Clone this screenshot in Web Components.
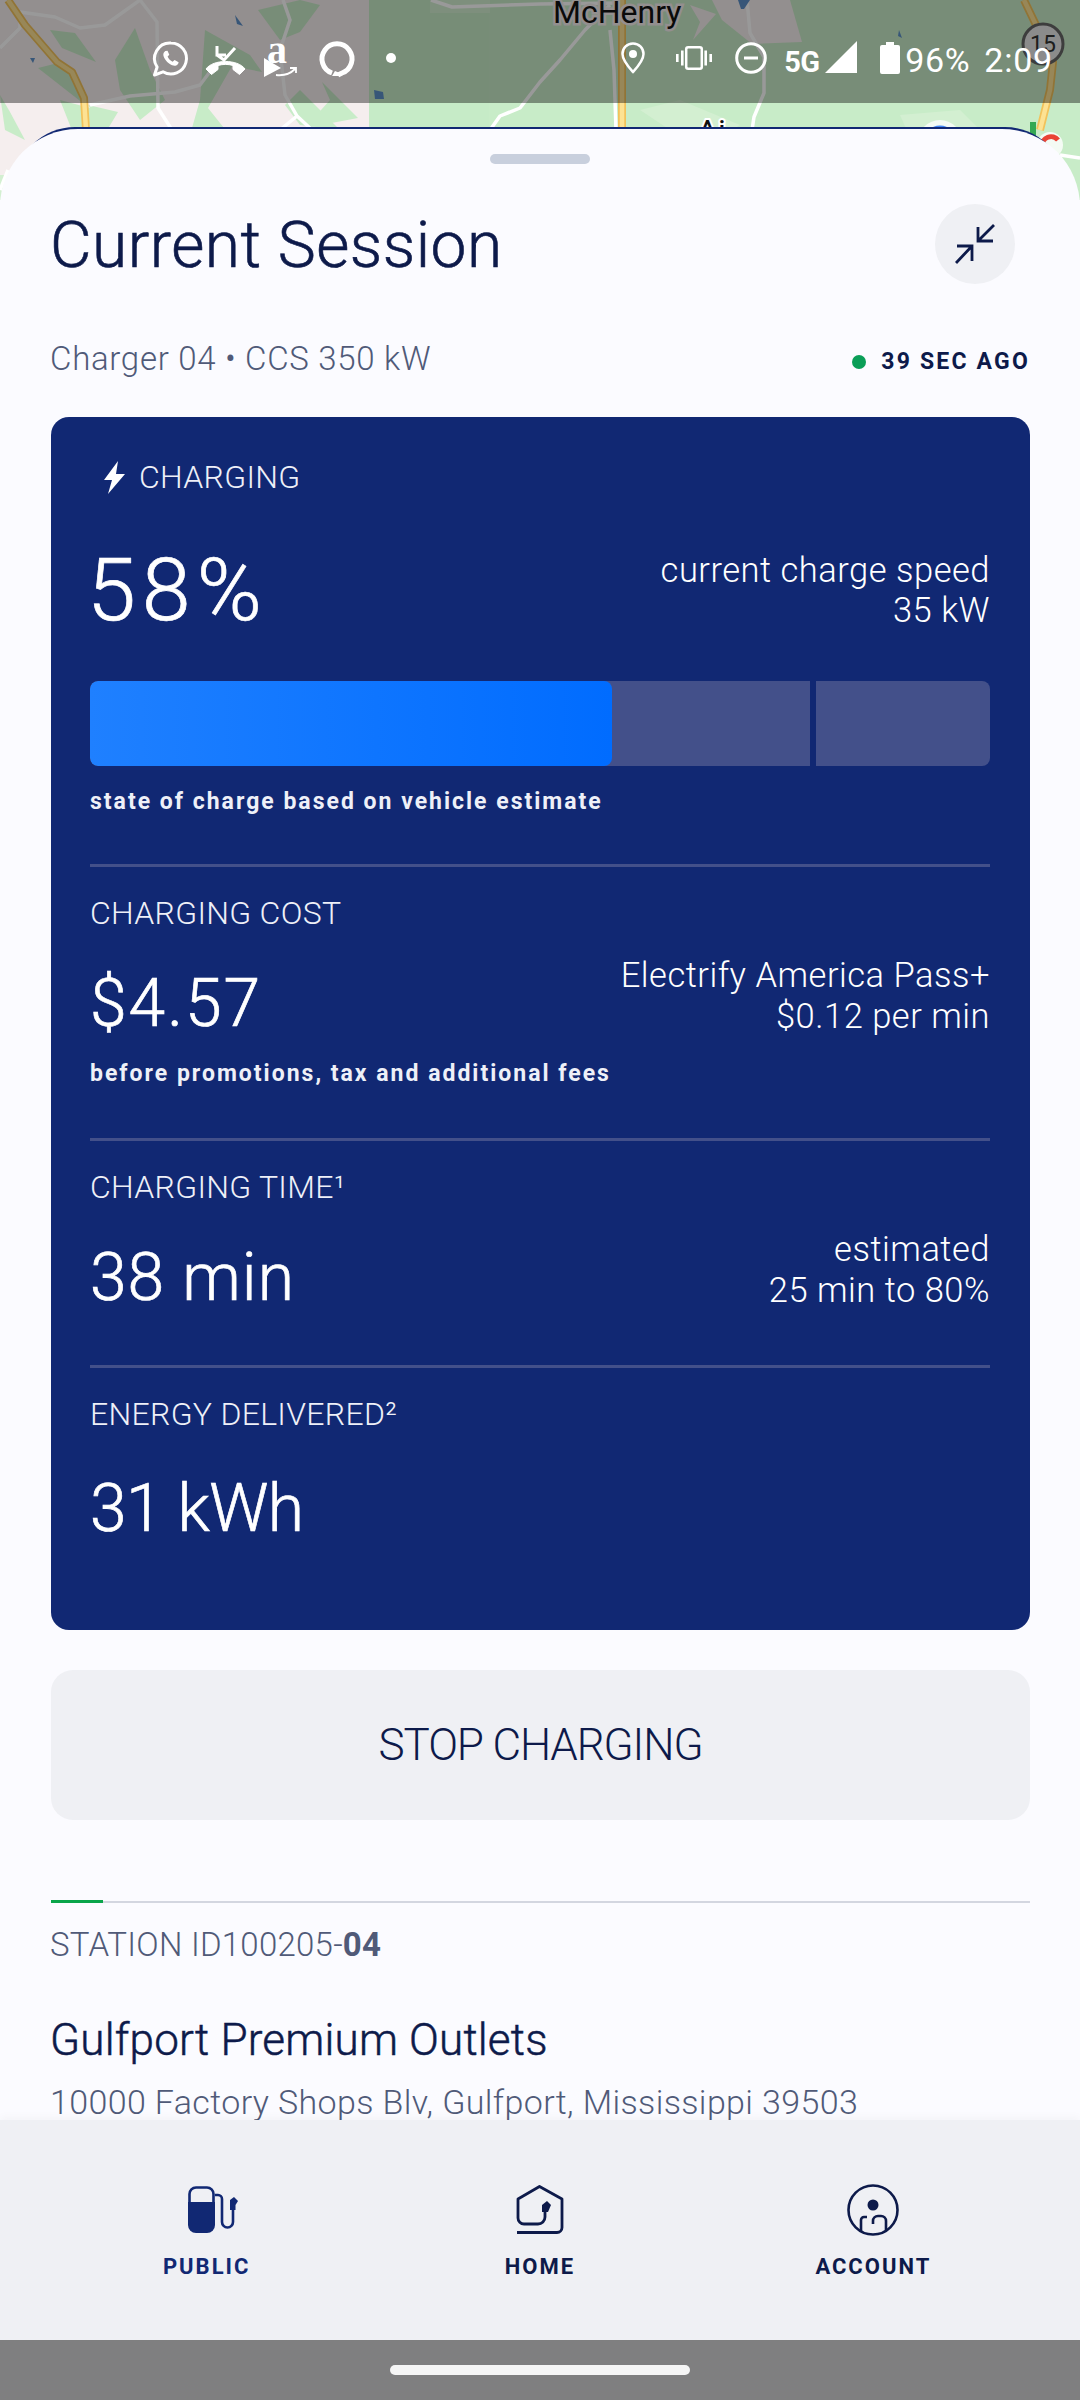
<!DOCTYPE html>
<html lang="en">
<head>
<meta charset="utf-8">
<title>Current Session</title>
<style>
  html, body { margin: 0; padding: 0; background: #fbfbff; }
  body { font-family: Roboto, "Liberation Sans", sans-serif; }
</style>
</head>
<body>
<app-screen>
  <map-header>
    <status-bar></status-bar>
  </map-header>
  <session-sheet>
    <metric-block slot="metrics" kind="hero">
      <span slot="label">CHARGING</span>
      <span slot="value">58%</span>
      <span slot="aside">current charge speed<br>35 kW</span>
      <charge-bar slot="extra"></charge-bar>
      <span slot="note">state of charge based on vehicle estimate</span>
    </metric-block>
    <metric-block slot="metrics" kind="cost">
      <span slot="label">CHARGING COST</span>
      <span slot="value">$4.57</span>
      <span slot="aside">Electrify America Pass+<br>$0.12 per min</span>
      <span slot="note">before promotions, tax and additional fees</span>
    </metric-block>
    <metric-block slot="metrics" kind="time">
      <span slot="label">CHARGING TIME¹</span>
      <span slot="value">38 min</span>
      <span slot="aside">estimated<br>25 min to 80%</span>
    </metric-block>
    <metric-block slot="metrics" kind="last">
      <span slot="label">ENERGY DELIVERED²</span>
      <span slot="value">31 kWh</span>
    </metric-block>
  </session-sheet>
  <tab-bar>
    <tab-item icon="public" active>PUBLIC</tab-item>
    <tab-item icon="home">HOME</tab-item>
    <tab-item icon="account">ACCOUNT</tab-item>
  </tab-bar>
  <gesture-bar></gesture-bar>
</app-screen>

<script>
class AppScreen extends HTMLElement {
  constructor() {
    super();
    this.attachShadow({ mode: 'open' });
    this.shadowRoot.innerHTML = `
      <style>
        :host { display: flex; flex-direction: column; width: 1080px; height: 2400px; overflow: hidden; position: relative; }
      </style>
      <slot></slot>`;
  }
}

class MapHeader extends HTMLElement {
  constructor() {
    super();
    this.attachShadow({ mode: 'open' });
    this.shadowRoot.innerHTML = `
      <style>
        :host { display: block; height: 129px; flex: none; position: relative; }
        svg { position: absolute; left: 0; top: 0; }
        .top { position: relative; }
      </style>
      <svg width="1080" height="200" viewBox="0 0 1080 200">
        <rect width="1080" height="200" fill="#c8ecc8"/>
        <rect width="369" height="200" fill="#f5eeee"/>
        <g fill="#c8ecc8">
          <polygon points="50,30 75,33 96,62 62,48"/>
          <polygon points="0,95 10,112 25,140 5,130"/>
          <polygon points="38,68 62,62 90,108 60,100 75,138 100,142 118,112 84,104"/>
          <polygon points="115,60 135,28 150,70 165,100 140,120 120,90"/>
          <polygon points="205,30 250,55 262,72 232,66 208,108 240,148 205,132 190,135 200,100"/>
          <polygon points="258,10 300,0 320,5 300,32 280,40"/>
          <polygon points="322,82 358,118 305,128 330,100"/>
          <polygon points="285,105 300,90 340,130 300,125"/>
        </g>
        <rect x="369" width="120" height="200" fill="#c6ebc7"/>
        <g fill="#d3efd1">
          <rect x="430" width="60" height="13"/>
          <polygon points="640,110 680,100 740,125 700,150"/>
          <polygon points="900,115 960,110 1000,150 920,160"/>
          <polygon points="0,175 22,175 8,200 0,200"/>
        </g>
        <g fill="#f5eeee">
          <polygon points="712,0 790,0 802,42 752,44 722,20"/>
          <polygon points="690,5 716,14 693,40 700,22"/>
        </g>
        <g fill="none" stroke="#fff" stroke-width="3.5" stroke-linejoin="round">
          <path d="M20 12 L55 17 L80 28 L105 25 L140 0"/>
          <path d="M0 48 L20 28 L20 12"/>
          <path d="M140 0 L157 22 L158 108 L172 130 L176 140"/>
          <path d="M283 0 L290 20 L280 50 L285 95 L297 116 L312 130"/>
          <path d="M297 116 L280 130"/>
          <path d="M90 105 L130 96 L175 92 L200 85 L215 65"/>
          <path d="M431 0 L452 7 L540 4 L620 3"/>
          <path d="M490 130 L500 116 L520 108 L540 82 L560 60 L585 30 L610 5"/>
          <path d="M610 30 L614 70 L616 130"/>
          <path d="M747 0 L750 33 L764 57 L764 93 L754 117 L752 130"/>
          <path d="M1060 155 L1080 158"/>
          <path d="M0 190 L8 170"/>
        </g>
        <g fill="none" stroke-linejoin="round">
          <path d="M8 0 L25 25 L57 62 L72 72 L84 98 L86 130 L88 160" stroke="#f2c25b" stroke-width="8"/>
          <path d="M8 0 L25 25 L57 62 L72 72 L84 98 L86 130 L88 160" stroke="#fde293" stroke-width="4.5"/>
          <path d="M622 0 V130" stroke="#f2c25b" stroke-width="8"/>
          <path d="M622 0 V130" stroke="#fde293" stroke-width="4.5"/>
          <path d="M1024 0 L1036 25 L1041 42 L1053 62 L1050 90 L1040 130" stroke="#f2c25b" stroke-width="8"/>
          <path d="M1024 0 L1036 25 L1041 42 L1053 62 L1050 90 L1040 130" stroke="#fde293" stroke-width="4.5"/>
        </g>
        <g fill="#5d90c8">
          <polygon points="738,0 750,0 744,9 741,9"/>
          <polygon points="235,15 243,26 237,24"/>
          <polygon points="30,58 35,58 33,63"/>
          <polygon points="374,90 383,92 384,99 375,99"/>
          <polygon points="899,30 902,38 898,36"/>
        </g>
        <circle cx="940" cy="142" r="22" fill="#fff" opacity=".75"/>
        <circle cx="940" cy="142" r="14" fill="none" stroke="#4285f4" stroke-width="5"/>
        <rect x="1030" y="122" width="6" height="18" fill="#34a853"/>
        <circle cx="1050" cy="145" r="13" fill="#fff" opacity=".8"/>
        <path d="M1042 146 a9 9 0 0 1 16 -6" fill="none" stroke="#ea4335" stroke-width="5"/>
        <circle cx="1043" cy="44" r="20" fill="#e8e8e8" stroke="#666" stroke-width="3"/>
        <text x="1043" y="52" text-anchor="middle" font-family="Roboto" font-size="23" fill="#333">15</text>
        <text x="553" y="23" font-family="Roboto" font-size="32" fill="#111" stroke="#f5eeee" stroke-width="5" paint-order="stroke">McHenry</text>
        <text x="697" y="142" font-family="Roboto" font-size="32" fill="#111" stroke="#fff" stroke-width="4" paint-order="stroke">Ai</text>
      </svg>
      <div class="top"><slot></slot></div>`;
  }
}

class StatusBar extends HTMLElement {
  constructor() {
    super();
    this.attachShadow({ mode: 'open' });
    this.shadowRoot.innerHTML = `
      <style>
        :host { display: flex; justify-content: space-between; align-items: flex-start; height: 103px; box-sizing: border-box; padding: 40px 27px 0 153px; background: rgba(0,0,0,.4); color: #fff; font-family: Roboto, sans-serif; }
        .group { display: flex; align-items: flex-start; }
        svg { display: block; flex: none; overflow: visible; }
        .net { font-size: 29px; font-weight: 700; line-height: 30px; margin: 7px 0 0 17px; width: 41px; letter-spacing: -.5px; }
        .pct { font-size: 34px; line-height: 36px; margin: 2px 0 0 5px; width: 79px; letter-spacing: .6px; }
        .time { font-size: 34px; line-height: 36px; margin: 2px 0 0 0; letter-spacing: .8px; }
      </style>
      <div class="group">
        <svg width="36" height="37" viewBox="0 0 36 37" fill="#fff" style="margin-top:1px">
          <path d="M18 2 a15.5 15.5 0 1 1 -8 28.8 L1.5 34 l2.6-8 A15.5 15.5 0 0 1 18 2z" fill="none" stroke="#fff" stroke-width="3" stroke-linejoin="round"/>
          <path d="M12.3 10 c-1.5 1-2.4 2.8-1.8 5 .7 2.7 3 5.6 5.6 7.6 2.8 2 5.4 2.6 7 1.9 1.5-.7 2.5-2 2.5-3.3 l-4-2.2 -2 1.8 c-2.1-1-4-3-5-5.3 l1.7-1.8 -1.8-3.9z"/>
        </svg>
        <svg width="40" height="30" viewBox="0 0 40 30" style="margin:5px 0 0 17px">
          <path d="M0 24 C7 14 32 14 39 24 L33.5 29.5 L27 24.5 V20.5 C22 19 17 19 12 20.5 V24.5 L5.5 29.5z" fill="#fff" stroke="#fff" stroke-width="1" stroke-linejoin="round"/>
          <path d="M11 1 V10 H20 M11 10 L18 15 L29 3" fill="none" stroke="#fff" stroke-width="3"/>
        </svg>
        <svg width="36" height="38" viewBox="0 0 36 38" style="margin:0 0 0 18px">
          <text x="3" y="23" font-family="Liberation Serif" font-weight="700" font-size="40" fill="#fff">a</text>
          <polygon points="0,18 17,28 0,37" fill="#fff"/>
          <path d="M12 35 C20 36 27 33 31 29 M26 28 H32 V33" fill="none" stroke="#fff" stroke-width="1.8"/>
        </svg>
        <svg width="36" height="36" viewBox="0 0 36 36" style="margin:1px 0 0 18px">
          <path d="M14 32 A15 15 0 1 1 24 32 L20 34" fill="none" stroke="#fff" stroke-width="5"/>
          <path d="M17 30 L14 35 L21 35 L24 33z" fill="#fff"/>
        </svg>
        <svg width="10" height="10" viewBox="0 0 10 10" style="margin:13px 0 0 32px"><circle cx="5" cy="5" r="5" fill="#fff"/></svg>
      </div>
      <div class="group">
        <svg width="24" height="32" viewBox="0 0 24 32" style="margin-top:2px">
          <path d="M12 1.5 C5.6 1.5 1.5 6.4 1.5 12 c0 6.5 6 13 10.5 18 C16.5 25 22.5 18.5 22.5 12 22.5 6.4 18.4 1.5 12 1.5z" fill="none" stroke="#fff" stroke-width="2.5"/>
          <circle cx="12" cy="12" r="4" fill="#fff"/>
        </svg>
        <svg width="36" height="24" viewBox="0 0 36 24" fill="#fff" style="margin:6px 0 0 31px">
          <rect x="10.2" y="1.2" width="15.6" height="21.6" rx="2" fill="none" stroke="#fff" stroke-width="2.5"/>
          <rect x="5" y="4.5" width="2.6" height="15"/><rect x="0" y="8" width="2.6" height="8"/>
          <rect x="28.4" y="4.5" width="2.6" height="15"/><rect x="33.4" y="8" width="2.6" height="8"/>
        </svg>
        <svg width="32" height="32" viewBox="0 0 32 32" style="margin:2px 0 0 23px">
          <circle cx="16" cy="16" r="14.3" fill="none" stroke="#fff" stroke-width="3"/>
          <path d="M9 16 H23" stroke="#fff" stroke-width="3"/>
        </svg>
        <span class="net">5G</span>
        <svg width="32" height="32" viewBox="0 0 32 32" style="margin:1px 0 0 0"><polygon points="0,32 32,0 32,32" fill="#fff"/></svg>
        <svg width="20" height="32" viewBox="0 0 20 32" style="margin:2px 0 0 23px"><path d="M6 0 H14 V3 H18 a2 2 0 0 1 2 2 V30 a2 2 0 0 1 -2 2 H2 a2 2 0 0 1 -2 -2 V5 a2 2 0 0 1 2 -2 H6z" fill="#fff"/></svg>
        <span class="pct">96%</span>
        <span class="time">2:09</span>
      </div>`;
  }
}

class SessionSheet extends HTMLElement {
  constructor() {
    super();
    this.attachShadow({ mode: 'open' });
    this.shadowRoot.innerHTML = `
      <style>
        :host { display: block; flex: 1 1 auto; min-height: 0; position: relative; z-index: 1; color: #0d1a4a; font-family: Roboto, sans-serif; }
        .backing { position: absolute; left: 15px; right: 15px; top: -2px; height: 90px; background: #112873; border-radius: 60px 60px 0 0; }
        .body { position: relative; height: 100%; box-sizing: border-box; overflow: hidden; background: #fbfbff; border-radius: 78px 78px 0 0; padding: 25px 50px 0 50px; }
        .handle { width: 100px; height: 10px; border-radius: 5px; background: #c8cfdd; margin: 0 auto; }
        .head { display: flex; justify-content: space-between; align-items: center; margin-top: 40px; height: 80px; padding-right: 15px; }
        h1 { margin: 3px 0 0; font-size: 64px; font-weight: 300; -webkit-text-stroke: .6px #0d1a4a; line-height: 80px; letter-spacing: .5px; }
        .close { width: 80px; height: 80px; border-radius: 50%; background: #eff0f4; display: flex; align-items: center; justify-content: center; }
        .sub { display: flex; justify-content: space-between; align-items: center; height: 40px; margin-top: 54px; }
        .charger { font-size: 33px; font-weight: 300; color: #505a78; letter-spacing: .7px; }
        .ago { display: flex; align-items: center; gap: 15px; font-size: 23px; font-weight: 700; letter-spacing: 2.2px; padding-top: 7px; }
        .dot { width: 14px; height: 14px; border-radius: 50%; background: #0a9e57; }
        .card { background: #112873; border-radius: 18px; margin: 39px 0 0 1px; height: 1213px; box-sizing: border-box; padding: 40px 40px 0 39px; color: #fff; }
        .stop { height: 150px; margin: 40px 0 0 1px; border-radius: 22px; background: #eff0f4; display: flex; align-items: center; justify-content: center; font-size: 44px; font-weight: 300; letter-spacing: -1.1px; }
        .rule { height: 2px; background: #d3d6e0; margin: 81px 0 0 1px; position: relative; }
        .rule i { display: block; width: 52px; height: 3px; background: #0aa54a; position: absolute; left: 0; top: -1px; }
        .station { font-size: 33px; font-weight: 300; color: #505a78; line-height: 40px; margin-top: 22px; letter-spacing: .25px; }
        .station b { font-weight: 700; }
        h2 { margin: 47px 0 0; font-size: 44px; font-weight: 300; -webkit-text-stroke: .5px #0d1a4a; line-height: 56px; letter-spacing: .2px; }
        .addr { font-size: 34px; font-weight: 300; color: #505a78; line-height: 38px; margin-top: 15px; white-space: nowrap; letter-spacing: .37px; }
      </style>
      <div class="backing"></div>
      <div class="body">
        <div class="handle"></div>
        <div class="head">
          <h1>Current Session</h1>
          <div class="close">
            <svg width="40" height="40" viewBox="0 0 40 40" fill="none" stroke="#0d1a4a" stroke-width="2.8">
              <path d="M38 17 H23 V3 M23 17 L39 1"/>
              <path d="M2 22 H17 V37 M17 22 L1 39"/>
            </svg>
          </div>
        </div>
        <div class="sub">
          <span class="charger">Charger 04 • CCS 350 kW</span>
          <span class="ago"><span class="dot"></span>39 SEC AGO</span>
        </div>
        <div class="card"><slot name="metrics"></slot></div>
        <div class="stop">STOP CHARGING</div>
        <div class="rule"><i></i></div>
        <div class="station">STATION ID100205-<b>04</b></div>
        <h2>Gulfport Premium Outlets</h2>
        <div class="addr">10000 Factory Shops Blv, Gulfport, Mississippi 39503</div>
      </div>`;
  }
}

class MetricBlock extends HTMLElement {
  constructor() {
    super();
    this.attachShadow({ mode: 'open' });
    const kind = this.getAttribute('kind');
    const hero = kind === 'hero';
    const pad = { hero: 47, cost: 49, time: 46, last: 0 }[kind];
    const track = { hero: 6, cost: 2, time: 1, last: -.6 }[kind];
    const top = hero ? 0 : 26;
    const rowGap = { hero: 53, cost: 30, time: 30, last: 34 }[kind];
    const bolt = hero ? `<svg class="bolt" width="21" height="33" viewBox="0 0 21 33"><polygon points="14,0 0,19 8,19 4,33 21,13 12,13" fill="#fff"/></svg>` : '';
    this.shadowRoot.innerHTML = `
      <style>
        :host { display: block; box-sizing: border-box; padding: ${top}px 0 ${pad}px; font-family: Roboto, sans-serif; ${kind === 'last' ? '' : 'border-bottom: 3px solid #43508a;'} }
        .label { display: flex; align-items: center; height: 40px; font-size: 32px; font-weight: 300; letter-spacing: .3px; color: #eef0f8; }
        .bolt { margin: 0 14px 0 14px; }
        .row { display: flex; justify-content: space-between; align-items: center; height: ${hero ? 80 : 82}px; margin-top: ${rowGap}px; }
        .value { font-size: ${hero ? 88 : 66}px; font-weight: 300; -webkit-text-stroke: .7px #fff; line-height: 1; letter-spacing: ${track}px; margin-left: ${hero ? -3 : 0}px; }
        .aside { font-size: 34.5px; font-weight: 300; line-height: ${hero ? 40 : 41}px; text-align: right; letter-spacing: .5px; margin-bottom: ${hero ? 0 : 16}px; }
        ::slotted([slot=extra]) { margin-top: 51px; }
        .note { font-size: 23px; font-weight: 700; letter-spacing: 2px; line-height: 30px; margin-top: ${hero ? 21 : 14}px; color: #eef0f8; }
      </style>
      <div class="label">${bolt}<slot name="label"></slot></div>
      <div class="row">
        <div class="value"><slot name="value"></slot></div>
        <div class="aside"><slot name="aside"></slot></div>
      </div>
      <slot name="extra"></slot>
      ${kind === 'hero' || kind === 'cost' ? '<div class="note"><slot name="note"></slot></div>' : ''}`;
  }
}

class ChargeBar extends HTMLElement {
  constructor() {
    super();
    this.attachShadow({ mode: 'open' });
    this.shadowRoot.innerHTML = `
      <style>
        :host { display: flex; height: 85px; gap: 6px; }
        .track { position: relative; flex: none; width: 720px; background: #43508a; border-radius: 8px 0 0 8px; overflow: hidden; }
        .fill { height: 100%; width: 522px; border-radius: 8px; background: linear-gradient(90deg, #1f80ff, #006cff); }
        .rest { flex: 1; background: #43508a; border-radius: 0 8px 8px 0; }
      </style>
      <div class="track"><div class="fill"></div></div>
      <div class="rest"></div>`;
  }
}

const TAB_ICONS = {
  public: `<svg width="50" height="48" viewBox="0 0 50 48" fill="none" stroke="#112873" stroke-width="2.6" style="margin-left:12px">
      <path d="M1.5 16 V8 a6.5 6.5 0 0 1 6.5 -6.5 H19 a6.5 6.5 0 0 1 6.5 6.5 V16" />
      <path d="M0 16 H27 V39 a8 8 0 0 1 -8 8 H8 a8 8 0 0 1 -8 -8z" fill="#112873" stroke="none"/>
      <path d="M27 9 H30 a4 4 0 0 1 4 4 V36 a5.5 5.5 0 0 0 11 0 V24"/>
      <path d="M42 24 V14 L46 11 L50 15 L47.5 19 V24z" fill="#112873" stroke="none"/>
    </svg>`,
  home: `<svg width="48" height="50" viewBox="0 0 48 50" fill="none" stroke="#0d1a4a" stroke-width="2.8" stroke-linejoin="round">
      <path d="M1 47.5 H41 a5 5 0 0 0 5 -5 V14 L23.5 1.5 L2 14 V33 a6 6 0 0 0 6 6 H22 a7 7 0 0 0 7 -7 V27"/>
      <path d="M26 27 V20 L31 16 L35 20 L32 27z" fill="#0d1a4a" stroke="none"/>
    </svg>`,
  account: `<svg width="52" height="52" viewBox="0 0 52 52" fill="none" stroke="#0d1a4a" stroke-width="2.6">
      <circle cx="26" cy="26" r="24.5"/>
      <circle cx="26" cy="21" r="5.5" fill="#0d1a4a" stroke="none"/>
      <path d="M14 47 V36 a3 3 0 0 1 3 -3 H20 M26 40 V37 a5 5 0 0 1 5 -5 H34 a5 5 0 0 1 5 5 V46"/>
    </svg>`
};

class TabItem extends HTMLElement {
  constructor() {
    super();
    this.attachShadow({ mode: 'open' });
    const active = this.hasAttribute('active');
    this.shadowRoot.innerHTML = `
      <style>
        :host { display: flex; flex-direction: column; align-items: center; color: ${active ? '#112873' : '#0d1a4a'}; font-family: Roboto, sans-serif; }
        .icon { height: 52px; display: flex; align-items: center; justify-content: center; }
        svg { display: block; }
        .text { font-size: 22px; font-weight: 700; letter-spacing: 2px; line-height: 26px; margin-top: 18px; }
      </style>
      <div class="icon">${TAB_ICONS[this.getAttribute('icon')]}</div>
      <div class="text"><slot></slot></div>`;
  }
}

class TabBar extends HTMLElement {
  constructor() {
    super();
    this.attachShadow({ mode: 'open' });
    this.shadowRoot.innerHTML = `
      <style>
        :host { display: grid; grid-template-columns: repeat(3, 1fr); flex: none; height: 220px; box-sizing: border-box; padding: 64px 40px 0; background: #eff0f4; box-shadow: 0 -3px 8px rgba(0,0,0,.03); position: relative; z-index: 2; }
      </style>
      <slot></slot>`;
  }
}

class GestureBar extends HTMLElement {
  constructor() {
    super();
    this.attachShadow({ mode: 'open' });
    this.shadowRoot.innerHTML = `
      <style>
        :host { display: flex; justify-content: center; flex: none; height: 60px; box-sizing: border-box; padding-top: 25px; background: #7f7f80; position: relative; z-index: 2; }
        .pill { width: 300px; height: 10px; border-radius: 5px; background: #f5f5f5; }
      </style>
      <div class="pill"></div>`;
  }
}

customElements.define('app-screen', AppScreen);
customElements.define('map-header', MapHeader);
customElements.define('status-bar', StatusBar);
customElements.define('session-sheet', SessionSheet);
customElements.define('metric-block', MetricBlock);
customElements.define('charge-bar', ChargeBar);
customElements.define('tab-item', TabItem);
customElements.define('tab-bar', TabBar);
customElements.define('gesture-bar', GestureBar);
</script>
</body>
</html>
